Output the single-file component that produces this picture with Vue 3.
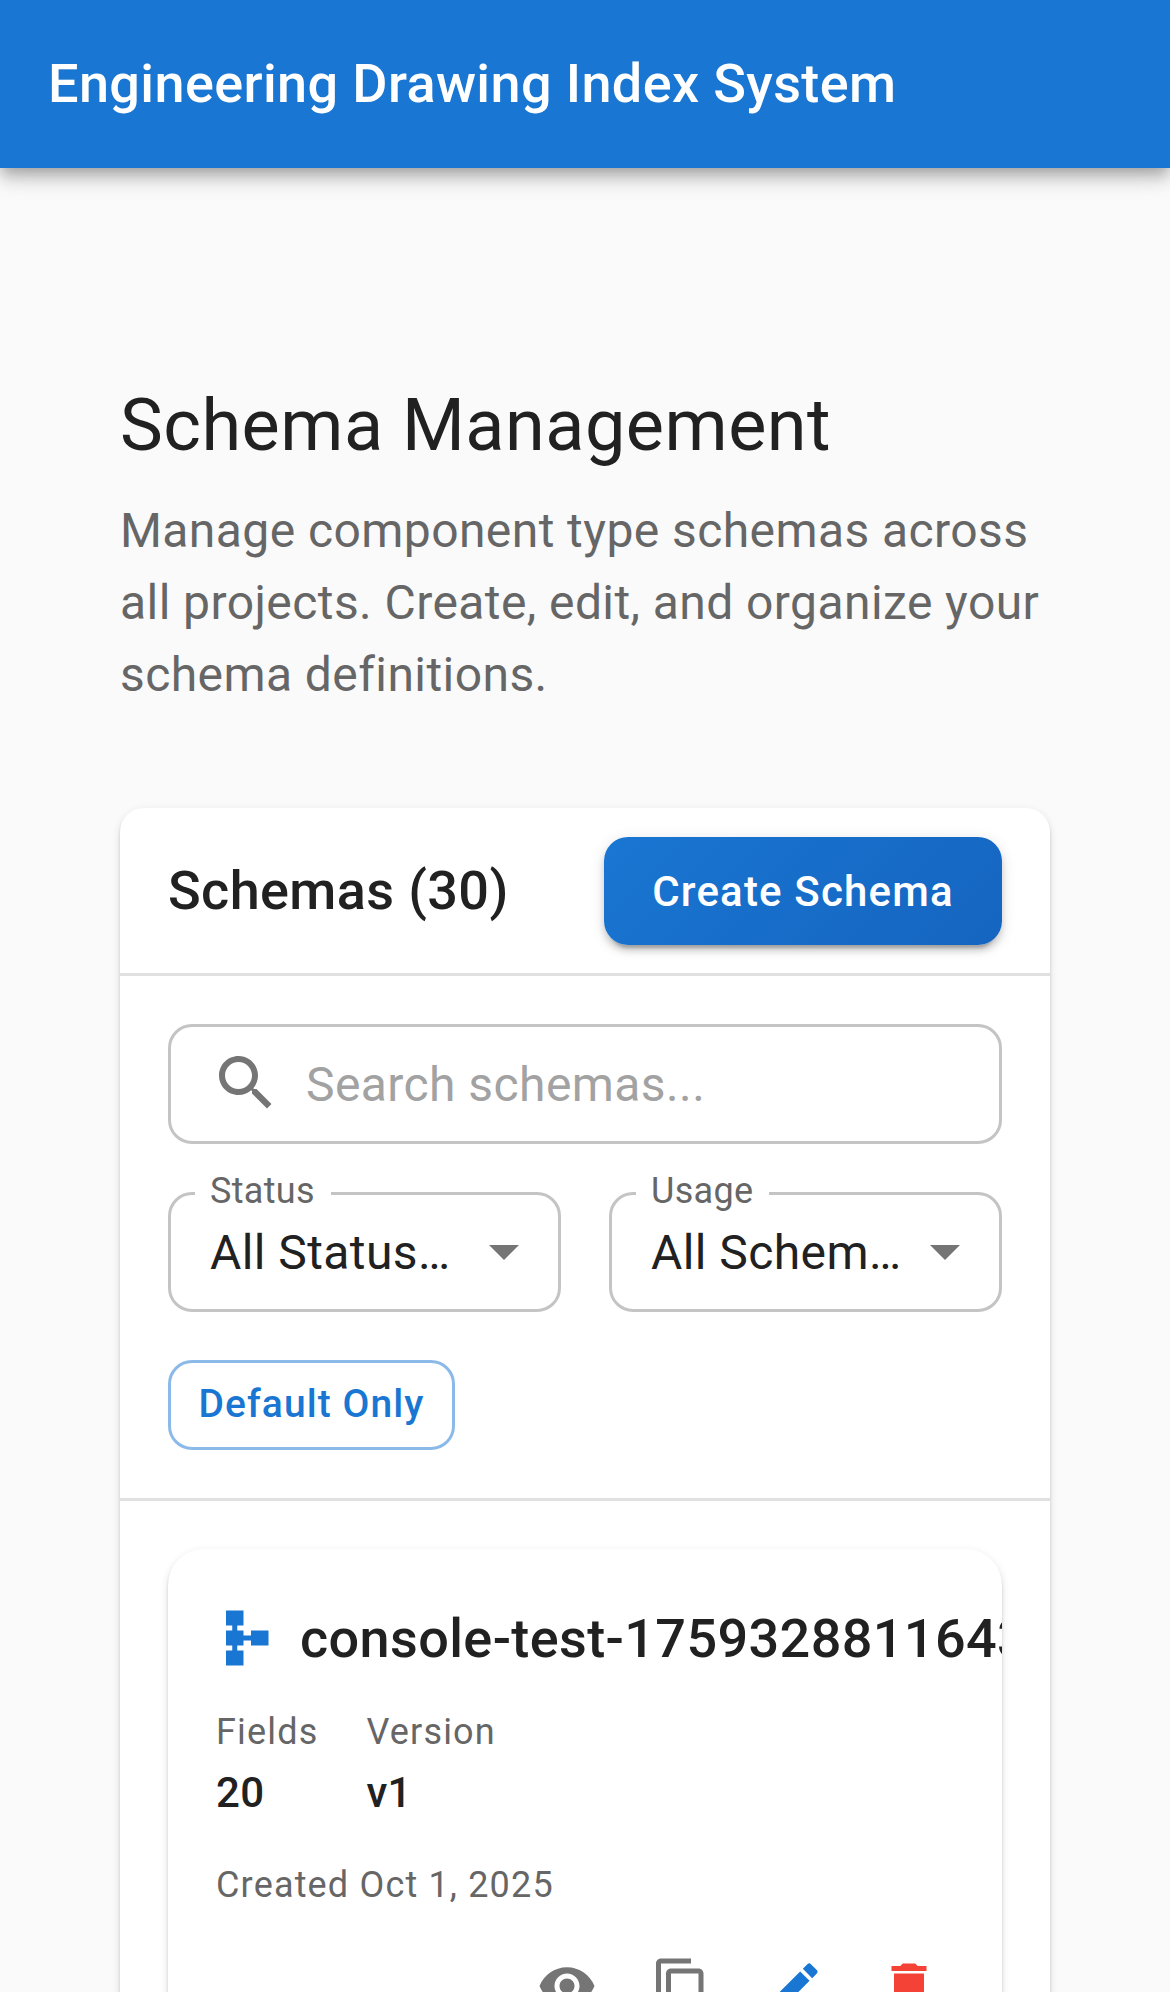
<script setup>
const filters = [
  { label: 'Status', value: 'All Status…' },
  { label: 'Usage', value: 'All Schem…' },
]

const stats = [
  { label: 'Fields', value: '20' },
  { label: 'Version', value: 'v1' },
]

const actions = [
  {
    name: 'View',
    tone: 'muted',
    path: 'M12 4.5C7 4.5 2.73 7.61 1 12c1.73 4.39 6 7.5 11 7.5s9.27-3.11 11-7.5c-1.73-4.39-6-7.5-11-7.5M12 17c-2.76 0-5-2.24-5-5s2.24-5 5-5 5 2.24 5 5-2.24 5-5 5m0-8c-1.66 0-3 1.34-3 3s1.34 3 3 3 3-1.34 3-3-1.34-3-3-3',
  },
  {
    name: 'Duplicate',
    tone: 'muted',
    path: 'M16 1H4c-1.1 0-2 .9-2 2v14h2V3h12zm3 4H8c-1.1 0-2 .9-2 2v14c0 1.1.9 2 2 2h11c1.1 0 2-.9 2-2V7c0-1.1-.9-2-2-2m0 16H8V7h11z',
  },
  {
    name: 'Edit',
    tone: 'primary',
    path: 'M3 17.25V21h3.75L17.81 9.94l-3.75-3.75zM20.71 7.04c.39-.39.39-1.02 0-1.41l-2.34-2.34a.996.996 0 0 0-1.41 0l-1.83 1.83 3.75 3.75z',
  },
  {
    name: 'Delete',
    tone: 'error',
    path: 'M6 19c0 1.1.9 2 2 2h8c1.1 0 2-.9 2-2V7H6zM19 4h-3.5l-1-1h-5l-1 1H5v2h14z',
  },
]
</script>

<template>
  <div class="page">
    <header class="app-bar">
      <div class="app-title">Engineering Drawing Index System</div>
    </header>

    <main class="content">
      <h1 class="heading">Schema Management</h1>
      <p class="intro">
        Manage component type schemas across all projects. Create, edit, and organize your schema
        definitions.
      </p>

      <section class="panel">
        <div class="panel-header">
          <h2 class="panel-title">Schemas (30)</h2>
          <button class="create">Create Schema</button>
        </div>

        <div class="filters">
          <div class="search">
            <svg class="search-icon" viewBox="0 0 24 24">
              <path
                d="M15.5 14h-.79l-.28-.27C15.41 12.59 16 11.11 16 9.5 16 5.91 13.09 3 9.5 3S3 5.91 3 9.5 5.91 16 9.5 16c1.61 0 3.09-.59 4.23-1.57l.27.28v.79l5 4.99L20.49 19zm-6 0C7.01 14 5 11.99 5 9.5S7.01 5 9.5 5 14 7.01 14 9.5 11.99 14 9.5 14"
              />
            </svg>
            <span class="placeholder">Search schemas...</span>
          </div>

          <div class="selects">
            <div v-for="f in filters" :key="f.label" class="select">
              <span class="select-label">{{ f.label }}</span>
              <span class="select-value">{{ f.value }}</span>
              <svg class="arrow" viewBox="0 0 24 24"><path d="m7 10 5 5 5-5z" /></svg>
            </div>
          </div>

          <button class="default-only">Default Only</button>
        </div>

        <div class="list">
          <article class="card">
            <div class="card-head">
              <svg class="schema-icon" viewBox="0 0 24 24">
                <path
                  d="M14 9v2h-3V9H8.5V7H11V1H4v6h2.5v2H4v6h2.5v2H4v6h7v-6H8.5v-2H11v-2h3v2h7V9z"
                />
              </svg>
              <h3 class="card-title">console-test-1759328811643</h3>
            </div>
            <div class="stats">
              <div v-for="s in stats" :key="s.label" class="stat">
                <span class="stat-label">{{ s.label }}</span>
                <span class="stat-value">{{ s.value }}</span>
              </div>
            </div>
            <div class="created">Created Oct 1, 2025</div>
            <div class="actions">
              <button
                v-for="a in actions"
                :key="a.name"
                class="action"
                :class="a.tone"
                :aria-label="a.name"
              >
                <svg viewBox="0 0 24 24"><path :d="a.path" /></svg>
              </button>
            </div>
          </article>
        </div>
      </section>
    </main>
  </div>
</template>

<style>
body {
  margin: 0;
  background: #fafafa;
}
</style>

<style scoped>
.page {
  box-sizing: border-box;
  height: 1992px;
  overflow: hidden;
  background: #fafafa;
  color: #212121;
  font-family: Roboto, sans-serif;
  font-size: 48px;
}
.page * {
  box-sizing: border-box;
}
h1,
h2,
h3,
p {
  margin: 0;
}
button {
  font-family: inherit;
  border: 0;
  padding: 0;
  background: none;
}
svg {
  display: block;
  fill: currentColor;
  flex: none;
}
.app-bar {
  height: 168px;
  padding: 0 48px;
  display: flex;
  align-items: center;
  background: #1976d2;
  color: #fff;
  box-shadow:
    0 6px 12px -3px rgba(0, 0, 0, 0.2),
    0 12px 15px 0 rgba(0, 0, 0, 0.14),
    0 3px 30px 0 rgba(0, 0, 0, 0.12);
}
.app-title {
  font-size: 54px;
  font-weight: 500;
  line-height: 86px;
  letter-spacing: 0.375px;
}
.content {
  padding: 213px 120px 0;
}
.heading {
  font-size: 72px;
  font-weight: 400;
  line-height: 89px;
  letter-spacing: 0.5px;
}
.intro {
  margin-top: 25px;
  line-height: 72px;
  letter-spacing: 0.422px;
  color: #666;
}
.panel {
  margin-top: 97px;
  height: 1400px;
  border-radius: 24px;
  background: #fff;
  box-shadow:
    0 6px 3px -3px rgba(0, 0, 0, 0.2),
    0 3px 3px 0 rgba(0, 0, 0, 0.14),
    0 3px 9px 0 rgba(0, 0, 0, 0.12);
}
.panel-header {
  height: 168px;
  padding: 0 48px;
  display: flex;
  align-items: center;
  justify-content: space-between;
  border-bottom: 3px solid #e0e0e0;
}
.panel-title {
  font-size: 54px;
  font-weight: 500;
  line-height: 86px;
  letter-spacing: 0.375px;
}
.create {
  width: 398px;
  height: 108px;
  padding-top: 2px;
  border-radius: 24px;
  background: linear-gradient(135deg, #1976d2 0%, #1565c0 100%);
  color: #fff;
  font-size: 42px;
  font-weight: 500;
  letter-spacing: 1.172px;
  box-shadow:
    0 9px 3px -6px rgba(0, 0, 0, 0.2),
    0 6px 6px 0 rgba(0, 0, 0, 0.14),
    0 3px 15px 0 rgba(0, 0, 0, 0.12);
}
.filters {
  padding: 48px;
  display: flex;
  flex-direction: column;
  align-items: flex-start;
  gap: 48px;
  border-bottom: 3px solid #e0e0e0;
}
.search {
  width: 100%;
  height: 120px;
  padding: 0 39px;
  display: flex;
  align-items: center;
  gap: 24px;
  border: 3px solid #c4c4c4;
  border-radius: 24px;
}
.search-icon {
  width: 72px;
  height: 72px;
  margin-top: -2px;
  color: #757575;
}
.placeholder {
  line-height: 69px;
  letter-spacing: 0.422px;
  color: #a2a2a2;
}
.selects {
  width: 100%;
  display: flex;
  gap: 48px;
}
.select {
  position: relative;
  flex: 1;
  height: 120px;
  padding: 0 18px 0 39px;
  display: flex;
  align-items: center;
  justify-content: space-between;
  border: 3px solid #c4c4c4;
  border-radius: 24px;
}
/* Floating label that interrupts the outline. */
.select-label {
  position: absolute;
  left: 24px;
  top: -28px;
  padding: 0 16px 0 15px;
  background: #fff;
  color: #666;
  font-size: 36px;
  line-height: 48px;
  letter-spacing: 0.328px;
}
.select-value {
  line-height: 69px;
  letter-spacing: 0.422px;
}
.arrow {
  width: 72px;
  height: 72px;
  margin-top: -2px;
  color: #757575;
}
.default-only {
  width: 287px;
  height: 90px;
  padding-bottom: 2px;
  border: 3px solid #8cbae8;
  border-radius: 24px;
  color: #1976d2;
  font-size: 39px;
  font-weight: 500;
  letter-spacing: 1.078px;
}
.list {
  padding: 48px;
}
.card {
  height: 560px;
  padding: 48px;
  overflow: hidden;
  border-radius: 36px;
  background: #fff;
  box-shadow:
    0 6px 3px -3px rgba(0, 0, 0, 0.2),
    0 3px 3px 0 rgba(0, 0, 0, 0.14),
    0 3px 9px 0 rgba(0, 0, 0, 0.12);
}
.card-head {
  height: 82px;
  display: flex;
  align-items: center;
  gap: 24px;
}
.schema-icon {
  width: 60px;
  height: 60px;
  color: #1976d2;
}
.card-title {
  padding-top: 2px;
  font-size: 54px;
  font-weight: 500;
  line-height: 82px;
  letter-spacing: 0.375px;
  white-space: nowrap;
}
.stats {
  margin-top: 23px;
  display: flex;
  gap: 48px;
}
.stat {
  display: flex;
  flex-direction: column;
}
.stat-label {
  color: #666;
  font-size: 36px;
  line-height: 60px;
  letter-spacing: 1.172px;
}
.stat-value {
  margin-top: 1px;
  font-size: 42px;
  font-weight: 500;
  line-height: 60px;
  letter-spacing: 0.281px;
}
.created {
  margin-top: 32px;
  color: #666;
  font-size: 36px;
  line-height: 60px;
  letter-spacing: 1.172px;
}
.actions {
  margin-top: 16.5px;
  margin-right: -9px;
  display: flex;
  justify-content: flex-end;
  gap: 6px;
}
.action {
  width: 108px;
  height: 108px;
  display: flex;
  align-items: center;
  justify-content: center;
}
.action svg {
  width: 60px;
  height: 60px;
}
.muted {
  color: #757575;
}
.primary {
  color: #1976d2;
}
.error {
  color: #f44336;
}
</style>
